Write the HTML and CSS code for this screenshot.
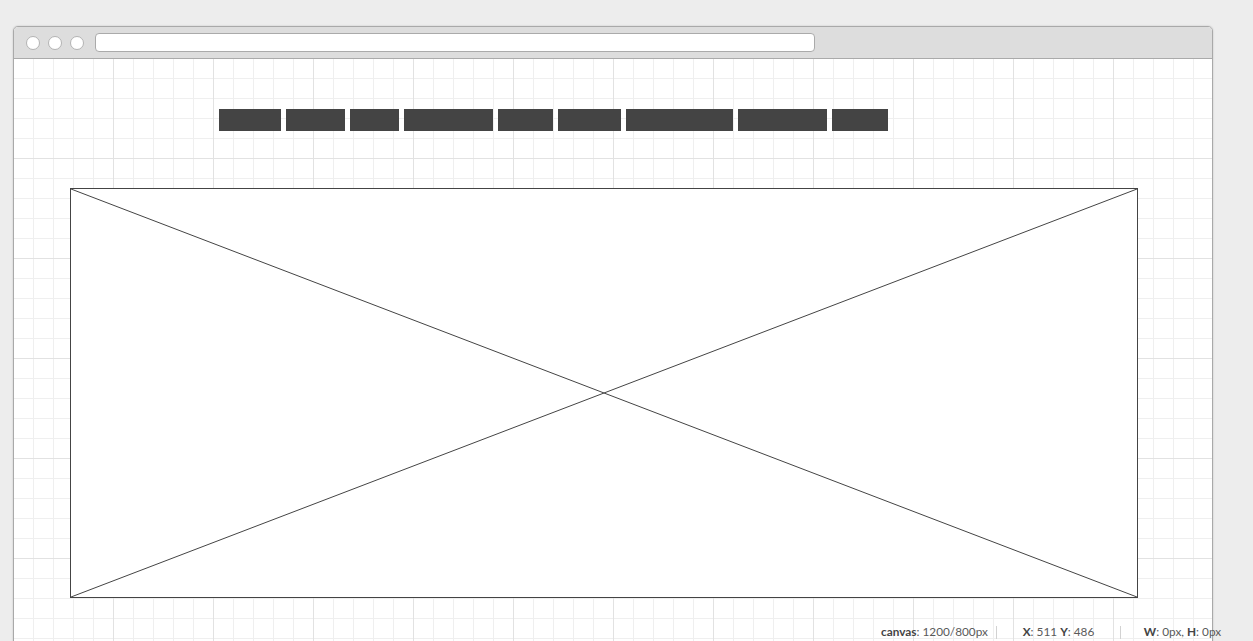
FILE: index.html
```html
<!DOCTYPE html>
<html lang="en">
<head>
<meta charset="utf-8">
<title>Wireframe</title>
<link rel="stylesheet" href="styles.css">
</head>
<body>
<div class="window">
  <div class="titlebar">
    <span class="dot"></span>
    <span class="dot"></span>
    <span class="dot"></span>
    <div class="address"></div>
  </div>
  <div class="canvas">
    <nav class="nav">
      <span class="nav-item w62"></span>
      <span class="nav-item w59"></span>
      <span class="nav-item w49"></span>
      <span class="nav-item w89"></span>
      <span class="nav-item w55"></span>
      <span class="nav-item w63"></span>
      <span class="nav-item w107"></span>
      <span class="nav-item w89"></span>
      <span class="nav-item w56"></span>
    </nav>
    <div class="placeholder">
      <svg class="cross" viewBox="0 0 100 100" preserveAspectRatio="none">
        <line x1="0" y1="0" x2="100" y2="100" vector-effect="non-scaling-stroke"/>
        <line x1="100" y1="0" x2="0" y2="100" vector-effect="non-scaling-stroke"/>
      </svg>
    </div>
  </div>
</div>
<div class="status">
  <div class="status-item"><b>canvas</b>: 1200/800px</div>
  <div class="status-item sep"><b>X</b>: 511 <b>Y</b>: 486</div>
  <div class="status-item sep"><b>W</b>: 0px, <b>H</b>: 0px</div>
</div>
</body>
</html>
```
FILE: styles.css
```css
html, body {
  margin: 0;
  padding: 0;
  height: 100%;
  overflow: hidden;
}
body {
  background: #ededed;
  font-family: Lato, "Liberation Sans", sans-serif;
  position: relative;
}
.window {
  margin: 26px 0 0 13px;
  width: 1198px;
  height: 700px;
  border: 1px solid #a9a9a9;
  border-radius: 5px 5px 0 0;
  background: #ffffff;
  box-shadow: 0 0 2px rgba(0, 0, 0, 0.18);
  overflow: hidden;
}
.titlebar {
  height: 31px;
  background: #dddddd;
  border-bottom: 1px solid #aaaaaa;
  display: flex;
  align-items: center;
  padding-left: 12px;
}
.dot {
  width: 12px;
  height: 12px;
  border: 1px solid #b3b3b3;
  border-radius: 50%;
  background: #ffffff;
  margin-right: 8px;
  flex: none;
}
.address {
  margin-left: 3px;
  width: 718px;
  height: 17px;
  border: 1px solid #aaaaaa;
  border-radius: 4px;
  background: #ffffff;
}
.canvas {
  height: 660px;
  padding: 50px 0 0 56px;
  box-sizing: border-box;
  background-color: #ffffff;
  background-image:
    linear-gradient(to right, transparent 99px, #e2e2e2 99px, #e2e2e2 100px),
    linear-gradient(to bottom, transparent 99px, #e2e2e2 99px, #e2e2e2 100px),
    linear-gradient(to right, transparent 19px, #efefef 19px, #efefef 20px),
    linear-gradient(to bottom, transparent 19px, #efefef 19px, #efefef 20px);
  background-size: 100px 100px, 100px 100px, 20px 20px, 20px 20px;
}
.nav {
  display: flex;
  gap: 5px;
  margin-left: 149px;
  height: 22px;
}
.nav-item {
  display: block;
  height: 22px;
  background: #444444;
}
.w62 { width: 62px; }
.w59 { width: 59px; }
.w49 { width: 49px; }
.w89 { width: 89px; }
.w55 { width: 55px; }
.w63 { width: 63px; }
.w107 { width: 107px; }
.w56 { width: 56px; }
.placeholder {
  margin-top: 57px;
  width: 1066px;
  height: 408px;
  border: 1px solid #444444;
  background: #ffffff;
}
.cross {
  display: block;
  width: 100%;
  height: 100%;
}
.cross line {
  stroke: #444444;
  stroke-width: 1;
}
.status {
  position: absolute;
  top: 626px;
  left: 873px;
  display: flex;
  font-size: 11.8px;
  color: #5a5a5a;
}
.status-item {
  width: 123px;
  height: 13px;
  line-height: 11px;
  text-align: center;
  white-space: nowrap;
}
.status-item b {
  color: #444444;
  font-weight: 700;
}
.sep {
  border-left: 1px solid #d2d2d2;
}
```
